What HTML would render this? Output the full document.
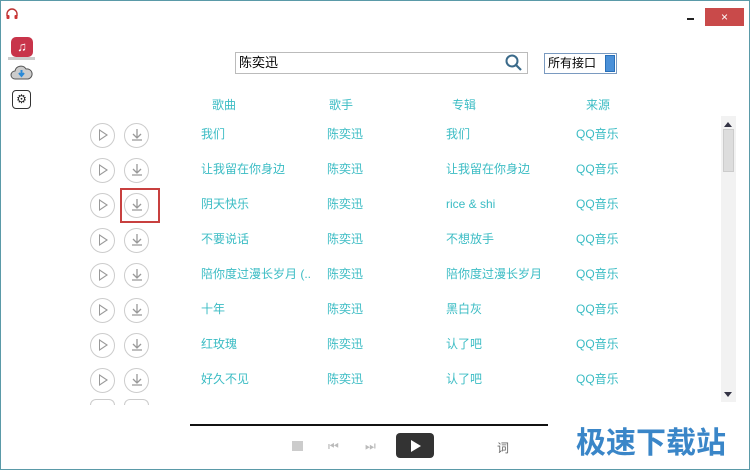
<!DOCTYPE html>
<html><head><meta charset="utf-8"><style>
*{margin:0;padding:0;box-sizing:border-box}
body{width:750px;height:470px;background:#fff;position:relative;overflow:hidden;font-family:"Liberation Sans","Noto Sans CJK SC",sans-serif;border:1px solid #5a9aa8}
.a{position:absolute}
.t{color:#3bbcc4;font-size:12px;line-height:14px;white-space:nowrap}
.c{position:absolute;width:25px;height:25px;border:1px solid #ccc;border-radius:50%}
</style></head><body>
<svg class="a" style="left:4px;top:6px" width="14" height="13" viewBox="0 0 14 13"><path d="M2 9V7a5 5 0 0 1 10 0v2" fill="none" stroke="#b33" stroke-width="1.4"/><rect x="1.5" y="8" width="3" height="4" rx="1" fill="#c33"/><rect x="9.5" y="8" width="3" height="4" rx="1" fill="#c33"/></svg>
<div class="a" style="left:686px;top:17px;width:7px;height:2px;background:#222"></div>
<div class="a" style="left:704px;top:7px;width:39px;height:18px;background:#c94a4a;color:#fff;font-size:12px;text-align:center;line-height:18px">×</div>
<div class="a" style="left:7px;top:56px;width:27px;height:3px;background:#ccc"></div>
<div class="a" style="left:10px;top:36px;width:22px;height:20px;background:#c8344a;border-radius:5px;color:#fff;font-size:13px;text-align:center;line-height:20px">♫</div>
<svg class="a" style="left:9px;top:63px" width="23" height="17" viewBox="0 0 23 17"><path d="M5 15a4 4 0 0 1 0-8 6 6 0 0 1 11-2 5 5 0 0 1 2 10z" fill="#ccc" stroke="#555"/><path d="M11.5 6v5M9 9l2.5 3 2.5-3" stroke="#2a8ad8" stroke-width="2" fill="none"/></svg>
<div class="a" style="left:11px;top:89px;width:19px;height:19px;border:1.5px solid #333;border-radius:4px;color:#222;font-size:12px;text-align:center;line-height:16px">⚙</div>
<div class="a" style="left:234px;top:51px;width:293px;height:22px;border:1px solid #bbb;font-size:13px;line-height:20px;padding-left:3px">陈奕迅</div>
<svg class="a" style="left:504px;top:53px" width="18" height="17" viewBox="0 0 18 17"><circle cx="7" cy="7" r="5.5" fill="none" stroke="#3a6a8a" stroke-width="2"/><path d="M11 11l5 5" stroke="#3a6a8a" stroke-width="2.2"/></svg>
<div class="a" style="left:543px;top:52px;width:73px;height:21px;border:1px solid #7a9ac0;font-size:12px;line-height:19px;padding-left:3px">所有接口</div>
<div class="a" style="left:604px;top:54px;width:10px;height:17px;background:#4a90d8;border:1px solid #2a70b8"></div>
<div class="a t" style="left:211px;top:97px">歌曲</div>
<div class="a t" style="left:328px;top:97px">歌手</div>
<div class="a t" style="left:451px;top:97px">专辑</div>
<div class="a t" style="left:585px;top:97px">来源</div>
<div id="rows"></div>
<div class="a" style="left:720px;top:115px;width:15px;height:286px;background:#f2f2f2"></div>
<div class="a" style="left:722px;top:128px;width:11px;height:43px;background:#ddd;border:1px solid #ccc"></div>
<div class="a" style="left:723px;top:117px;width:0;height:0;border:4px solid transparent;border-bottom:5px solid #334"></div>
<div class="a" style="left:723px;top:391px;width:0;height:0;border:4px solid transparent;border-top:5px solid #334"></div>
<div class="a" style="left:189px;top:423px;width:358px;height:2px;background:#111"></div>
<div class="a" style="left:291px;top:440px;width:11px;height:10px;background:#ccc"></div>
<div class="a" style="left:327px;top:438px;color:#bbb;font-size:12px">⏮</div>
<div class="a" style="left:364px;top:438px;color:#bbb;font-size:12px">⏭</div>
<div class="a" style="left:395px;top:432px;width:38px;height:25px;background:#333;border-radius:4px"></div>
<div class="a" style="left:410px;top:439px;width:0;height:0;border-top:6px solid transparent;border-bottom:6px solid transparent;border-left:10px solid #fff"></div>
<div class="a" style="left:496px;top:438px;font-size:12px;color:#666">词</div>
<div class="a" style="left:575px;top:421px;font-size:30px;font-weight:bold;color:#3a86c8;font-family:'Noto Sans CJK SC',sans-serif;line-height:36px">极速下载站</div>
<div class="a" style="left:119px;top:187px;width:40px;height:35px;border:2px solid #c8403f"></div>
<script>
var d=[["我们","我们"],["让我留在你身边","让我留在你身边"],["阴天快乐","rice & shi"],["不要说话","不想放手"],["陪你度过漫长岁月 (..","陪你度过漫长岁月"],["十年","黑白灰"],["红玫瑰","认了吧"],["好久不见","认了吧"]];
var h="";d.forEach(function(r,i){var y=134+35*i;
h+='<div class="c" style="left:89px;top:'+(y-12)+'px"></div><div class="a" style="left:98px;top:'+(y-6)+'px;border-top:6px solid transparent;border-bottom:6px solid transparent;border-left:9px solid #999;width:0;height:0"></div><div class="a" style="left:99px;top:'+(y-4)+'px;border-top:4px solid transparent;border-bottom:4px solid transparent;border-left:6px solid #fff;width:0;height:0"></div>';
h+='<div class="c" style="left:123px;top:'+(y-12)+'px"></div><svg class="a" style="left:128px;top:'+(y-8)+'px" width="16" height="16" viewBox="0 0 16 16"><path d="M8 2v8M4 7l4 4 4-4M3 13h10" stroke="#999" stroke-width="1.3" fill="none"/></svg>';
var ty=y-8;
h+='<div class="a t" style="left:200px;top:'+ty+'px">'+r[0]+'</div><div class="a t" style="left:326px;top:'+ty+'px">陈奕迅</div><div class="a t" style="left:445px;top:'+ty+'px">'+r[1]+'</div><div class="a t" style="left:575px;top:'+ty+'px">QQ音乐</div>';});
h+='<div class="c" style="left:89px;top:398px;height:6px;border-bottom:none;border-radius:13px 13px 0 0"></div><div class="c" style="left:123px;top:398px;height:6px;border-bottom:none;border-radius:13px 13px 0 0"></div>';
document.getElementById("rows").outerHTML=h;
</script>
</body></html>
